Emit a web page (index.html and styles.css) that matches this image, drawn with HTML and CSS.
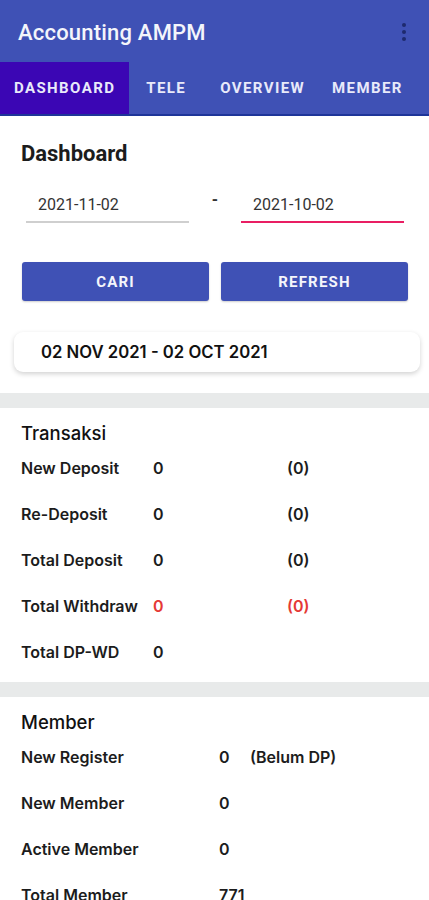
FILE: index.html
```html
<!DOCTYPE html>
<html lang="id">
<head>
    <meta charset="UTF-8">
    <meta name="viewport" content="width=device-width, initial-scale=1.0">
    <title>Accounting AMPM</title>
    <link rel="stylesheet" href="styles.css">
</head>
<body>

<header class="appbar">
    <div class="app-title">Accounting AMPM</div>
    <span class="menu-dots"><i></i><i></i><i></i></span>
</header>

<nav class="tabs">
    <div class="tab active">DASHBOARD</div>
    <div class="tab">TELE</div>
    <div class="tab">OVERVIEW</div>
    <div class="tab">MEMBER</div>
</nav>

<section class="filter">
    <h2 class="page-title">Dashboard</h2>

    <div class="date-row">
        <div class="date-field">2021-11-02</div>
        <span class="date-sep">-</span>
        <div class="date-field focused">2021-10-02</div>
    </div>

    <div class="actions">
        <button class="btn">CARI</button>
        <button class="btn">REFRESH</button>
    </div>

    <div class="range-card">02 NOV 2021 - 02 OCT 2021</div>
</section>

<div class="divider"></div>

<section class="stats">
    <h3 class="stats-title">Transaksi</h3>
    <div class="stat-row">
        <span class="label">New Deposit</span><span class="value">0</span><span class="value">(0)</span>
    </div>
    <div class="stat-row">
        <span class="label">Re-Deposit</span><span class="value">0</span><span class="value">(0)</span>
    </div>
    <div class="stat-row">
        <span class="label">Total Deposit</span><span class="value">0</span><span class="value">(0)</span>
    </div>
    <div class="stat-row">
        <span class="label">Total Withdraw</span><span class="value red">0</span><span class="value red">(0)</span>
    </div>
    <div class="stat-row">
        <span class="label">Total DP-WD</span><span class="value">0</span><span class="value"></span>
    </div>
</section>

<div class="divider"></div>

<section class="stats member">
    <h3 class="stats-title">Member</h3>
    <div class="stat-row">
        <span class="label">New Register</span><span class="value">0</span><span class="value">(Belum DP)</span>
    </div>
    <div class="stat-row">
        <span class="label">New Member</span><span class="value">0</span><span class="value"></span>
    </div>
    <div class="stat-row">
        <span class="label">Active Member</span><span class="value">0</span><span class="value"></span>
    </div>
    <div class="stat-row">
        <span class="label">Total Member</span><span class="value">771</span><span class="value"></span>
    </div>
</section>

</body>
</html>
```

FILE: styles.css
```css
* {box-sizing: border-box; margin: 0; padding: 0;}
body {
    font-family: Roboto, "Liberation Sans", sans-serif;
    background: #ffffff;
    color: #1c1c1c;
    width: 429px;
    overflow: hidden;
}

.appbar {
    height: 62px;
    background: #3f51b5;
    display: flex;
    align-items: center;
    justify-content: space-between;
    padding: 2px 18px 0 18px;
}

.app-title {
    color: #f4f5fb;
    font-size: 22px;
    font-weight: 500;
    letter-spacing: 0.2px;
}

.menu-dots {
    display: flex;
    flex-direction: column;
    gap: 3px;
    margin-right: 5px;
}

.menu-dots i {
    width: 4px;
    height: 4px;
    border-radius: 50%;
    background: #1e2a6e;
}

.tabs {
    display: flex;
    height: 54px;
    background: #3f51b5;
    border-bottom: 2px solid #1e3599;
}

.tab {
    display: flex;
    align-items: center;
    padding: 0 17px;
    color: #e9eafa;
    font-size: 15px;
    font-weight: 700;
    letter-spacing: 1.4px;
}

.tab.active {
    background: #3b06b4;
    padding: 0 14px;
}

.tab:last-child {
    padding-left: 10px;
}

.filter {
    padding: 25px 21px 21px 14px;
}

.page-title {
    font-size: 22px;
    font-weight: 700;
    line-height: 26px;
    margin-left: 7px;
}

.date-row {
    display: flex;
    align-items: center;
    margin: 22px 0 0 12px;
}

.date-field {
    width: 163px;
    padding: 6px 12px 7px;
    font-size: 16px;
    color: #333;
    border-bottom: 2px solid #cfcfcf;
}

.date-field.focused {
    border-bottom-color: #e91e63;
}

.date-sep {
    width: 52px;
    text-align: center;
    font-size: 16px;
    font-weight: 700;
    color: #333;
    margin-top: -14px;
}

.actions {
    display: flex;
    gap: 12px;
    margin: 39px 0 0 8px;
}

.btn {
    flex: 1;
    height: 39px;
    border: none;
    border-radius: 3px;
    background: #3f51b5;
    color: #f4f5fb;
    font-family: Roboto, "Liberation Sans", sans-serif;
    font-size: 15px;
    font-weight: 700;
    letter-spacing: 1.2px;
    box-shadow: 0 1px 2px rgba(0,0,0,0.2);
}

.range-card {
    margin: 31px -12px 0 0;
    height: 40px;
    display: flex;
    align-items: center;
    padding-left: 27px;
    background: #fff;
    border-radius: 9px;
    box-shadow: 0 2px 5px rgba(0,0,0,0.18);
    font-family: Inter, "Liberation Sans", sans-serif;
    font-size: 16.7px;
    font-weight: 600;
    color: #111;
}

.divider {
    height: 15px;
    background: #e8eaea;
}

.stats {
    padding: 13px 21px 7px;
    font-family: Inter, "Liberation Sans", sans-serif;
}

.stats-title {
    font-size: 18.5px;
    font-weight: 500;
    line-height: 24px;
    color: #111;
}

.stat-row {
    display: grid;
    grid-template-columns: 132px 134px 1fr;
    height: 46px;
    align-items: center;
    font-size: 16px;
    font-weight: 600;
    color: #1c1c1c;
}

.member .stat-row {
    grid-template-columns: 198px 31px 1fr;
}

.red {
    color: #e53935;
}
```
